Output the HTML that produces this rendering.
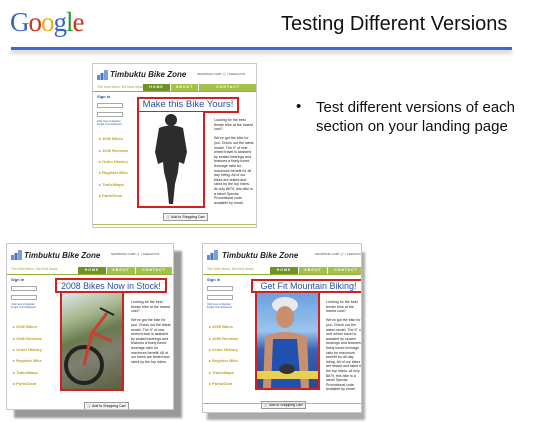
<!DOCTYPE html>
<html><head><meta charset="utf-8"><style>
*{margin:0;padding:0;box-sizing:border-box}
body{width:550px;height:422px;background:#fff;position:relative;overflow:hidden;font-family:"Liberation Sans",sans-serif}
.a{position:absolute}
.g{font-family:"Liberation Serif",serif;font-size:27px;letter-spacing:-1px;top:7px;left:10px}
.mk{position:absolute;width:165px;height:165px;background:#fff;border:1px solid #c8c8c8;overflow:hidden}
.mk .a{position:absolute}
.logo{left:4px;top:6px;width:11px;height:10px}
.ttl{left:17px;top:6px;font-size:8px;font-weight:bold;font-style:italic;color:#222;white-space:nowrap}
.cart{left:104px;top:8px;font-size:3px;color:#444;white-space:nowrap}
.tag{left:4px;top:21px;font-size:3.5px;color:#b0a040;white-space:nowrap}
.nav{top:20px;height:7px;font-size:3.5px;color:#fff;font-weight:bold;text-align:center;line-height:7px;letter-spacing:1px}
.line{left:0;top:27px;width:100%;height:1px;background:#9ab040}
.side{font-size:4px;color:#c0a020;font-weight:bold;left:6px;white-space:nowrap}
.in{left:4px;width:26px;height:5px;border:1px solid #aaa}
.hd{border:2px solid #d02020;color:#2a50a0;font-size:9px;text-align:center;white-space:nowrap;line-height:12px;overflow:hidden}
.img{border:2px solid #d02020;border-top:none}
.txt{font-size:3.6px;line-height:4.6px;color:#222}
.btn{font-size:3.5px;border:1px solid #999;padding:1px 2px;white-space:nowrap;background:#f4f4f4}
.bot{left:0;bottom:2px;width:100%;height:1px;background:#b0c060}
</style></head><body>
<div class="a g"><span style="color:#3464c8">G</span><span style="color:#d03020">o</span><span style="color:#e8b010">o</span><span style="color:#3464c8">g</span><span style="color:#2a9a30">l</span><span style="color:#d03020">e</span></div>
<div class="a" style="left:281px;top:13px;font-size:20px;color:#111;white-space:nowrap">Testing Different Versions</div>
<div class="a" style="left:11px;top:47px;width:501px;height:3px;background:#3e6ad0;box-shadow:0 3px 4px rgba(0,0,0,.25)"></div>
<div class="a" style="left:296px;top:98px;font-size:15px;color:#111">•</div>
<div class="a" style="left:316px;top:98px;font-size:15px;line-height:19px;color:#111;white-space:nowrap">Test different versions of each<br>section on your landing page</div>

<!-- mockup 1 -->
<div class="mk" style="left:92px;top:63px">
<svg class="a logo" viewBox="0 0 11 10"><rect x="0" y="5" width="3" height="5" fill="#6a8ac8"/><rect x="3.5" y="3" width="3" height="7" fill="#4a70c0"/><rect x="7" y="0" width="4" height="10" fill="#7aa0d8"/></svg>
<div class="a ttl">Timbuktu Bike Zone</div>
<div class="a cart">SHOPPING CART 🛒 | CHECKOUT</div>
<div class="a tag">The best bikes, the best deals</div>
<div class="a nav" style="left:50px;width:27px;background:#6e9426">HOME</div>
<div class="a nav" style="left:78px;width:27px;background:#a4c24a">ABOUT</div>
<div class="a nav" style="left:106px;width:58px;background:#a4c24a">CONTACT</div>
<div class="a line"></div>
<div class="a side" style="left:4px;top:30px;color:#2a50a0">Sign in</div>
<div class="a in" style="top:39px"></div><div class="a in" style="top:48px"></div>
<div class="a" style="left:4px;top:56px;font-size:2.5px;color:#2a50a0">Click here to Register<br>Forgot Your Password</div>
<div class="a side" style="top:72px">▸ 2006 Bikes</div>
<div class="a side" style="top:84px">▸ 2006 Reviews</div>
<div class="a side" style="top:95px">▸ Order History</div>
<div class="a side" style="top:106px">▸ Register Bike</div>
<div class="a side" style="top:118px">▸ Trails/Maps</div>
<div class="a side" style="top:129px">▸ Parts/Gear</div>
<div class="a hd" style="left:44px;top:33px;width:102px;height:16px;font-size:9.5px">Make this Bike Yours!</div>
<div class="a img" style="left:44px;top:48px;width:68px;height:96px;background:#fff">
<svg width="64" height="94" viewBox="0 0 64 94"><g fill="#2c2c2c"><circle cx="32" cy="8" r="6"/><path d="M20 16 Q32 11 44 16 L48 40 L45 52 L40 50 L39 60 L36 72 L34 92 L30 92 L28 72 L25 60 L24 50 L19 52 L16 40Z"/><rect x="22" y="24" width="20" height="3"/></g></svg></div>
<div class="a txt" style="left:121px;top:54px;width:40px">Looking for the best terrain bike at the lowest cost?<br><br>We've got the bike for you. Check out the latest model. The 5" of rear wheel travel is assisted by sealed bearings and features a finely tuned leverage ratio for maximum benefit for all day riding. All of our bikes are tested and rated by the top riders. At only $679, this bike is a steal! Special Promotional code available by email.</div>
<div class="a btn" style="left:70px;top:149px">🛒 Add to Shopping Cart</div>
<div class="a bot"></div>
</div>

<!-- mockup 2 -->
<div class="a" style="left:14px;top:251px;width:168px;height:167px;background:#999;filter:blur(1px)"></div>
<div class="mk" style="left:6px;top:243px;width:168px;height:167px">
<svg class="a logo" viewBox="0 0 11 10"><rect x="0" y="5" width="3" height="5" fill="#6a8ac8"/><rect x="3.5" y="3" width="3" height="7" fill="#4a70c0"/><rect x="7" y="0" width="4" height="10" fill="#7aa0d8"/></svg>
<div class="a ttl" style="top:7px">Timbuktu Bike Zone</div>
<div class="a cart">SHOPPING CART 🛒 | CHECKOUT</div>
<div class="a tag" style="top:23px">The best bikes, the best deals</div>
<div class="a nav" style="left:71px;top:23px;width:28px;background:#6e9426">HOME</div>
<div class="a nav" style="left:100px;top:23px;width:28px;background:#a4c24a">ABOUT</div>
<div class="a nav" style="left:129px;top:23px;width:36px;background:#a4c24a">CONTACT</div>
<div class="a line" style="top:30px"></div>
<div class="a side" style="left:4px;top:33px;color:#2a50a0">Sign in</div>
<div class="a in" style="top:42px"></div><div class="a in" style="top:51px"></div>
<div class="a" style="left:4px;top:59px;font-size:2.5px;color:#2a50a0">Click here to Register<br>Forgot Your Password</div>
<div class="a side" style="top:80px">▸ 2006 Bikes</div>
<div class="a side" style="top:92px">▸ 2006 Reviews</div>
<div class="a side" style="top:103px">▸ Order History</div>
<div class="a side" style="top:114px">▸ Register Bike</div>
<div class="a side" style="top:126px">▸ Trails/Maps</div>
<div class="a side" style="top:137px">▸ Parts/Gear</div>
<div class="a hd" style="left:48px;top:34px;width:112px;height:15px;font-size:8.8px">2008 Bikes Now in Stock!</div>
<div class="a img" style="left:53px;top:49px;width:64px;height:98px;background:linear-gradient(160deg,#dfe8f0 0%,#a8b890 25%,#6a7a50 45%,#808070 65%,#5a6040 100%)">
<svg width="60" height="96" viewBox="0 0 60 96"><circle cx="22" cy="72" r="18" fill="none" stroke="#222" stroke-width="4"/><path d="M22 72 L30 40 L45 20 M30 40 L50 48" stroke="#c84030" stroke-width="3" fill="none"/><path d="M38 15 L52 22" stroke="#222" stroke-width="2"/></svg></div>
<div class="a txt" style="left:124px;top:56px;width:40px">Looking for the best terrain bike at the lowest cost?<br><br>We've got the bike for you. Check out the latest model. The 5" of rear wheel travel is assisted by sealed bearings and features a finely tuned leverage ratio for maximum benefit. All of our bikes are tested and rated by the top riders.</div>
<div class="a btn" style="left:77px;top:158px">🛒 Add to Shopping Cart</div>
</div>

<!-- mockup 3 -->
<div class="a" style="left:207px;top:252px;width:158px;height:168px;background:#aaa;filter:blur(1px)"></div>
<div class="mk" style="left:202px;top:243px;width:160px;height:170px">
<svg class="a logo" viewBox="0 0 11 10"><rect x="0" y="5" width="3" height="5" fill="#6a8ac8"/><rect x="3.5" y="3" width="3" height="7" fill="#4a70c0"/><rect x="7" y="0" width="4" height="10" fill="#7aa0d8"/></svg>
<div class="a ttl" style="top:7px;left:19px">Timbuktu Bike Zone</div>
<div class="a cart" style="left:112px">SHOPPING CART 🛒 | CHECKOUT</div>
<div class="a tag" style="top:23px">The best bikes, the best deals</div>
<div class="a nav" style="left:67px;top:23px;width:28px;background:#6e9426">HOME</div>
<div class="a nav" style="left:96px;top:23px;width:28px;background:#a4c24a">ABOUT</div>
<div class="a nav" style="left:125px;top:23px;width:36px;background:#a4c24a">CONTACT</div>
<div class="a line" style="top:30px"></div>
<div class="a side" style="left:4px;top:33px;color:#2a50a0">Sign in</div>
<div class="a in" style="top:42px"></div><div class="a in" style="top:51px"></div>
<div class="a" style="left:4px;top:59px;font-size:2.5px;color:#2a50a0">Click here to Register<br>Forgot Your Password</div>
<div class="a side" style="top:80px">▸ 2006 Bikes</div>
<div class="a side" style="top:92px">▸ 2006 Reviews</div>
<div class="a side" style="top:103px">▸ Order History</div>
<div class="a side" style="top:114px">▸ Register Bike</div>
<div class="a side" style="top:126px">▸ Trails/Maps</div>
<div class="a side" style="top:137px">▸ Parts/Gear</div>
<div class="a hd" style="left:48px;top:35px;width:115px;height:14px;line-height:10px;font-size:9px">Get Fit Mountain Biking!</div>
<div class="a img" style="left:52px;top:49px;width:65px;height:97px;background:linear-gradient(180deg,#6aa0e0 0%,#9cc4ec 40%,#3a60b0 60%,#2a4a90 100%)">
<svg width="61" height="95" viewBox="0 0 61 95"><ellipse cx="28" cy="12" rx="13" ry="8" fill="#e8e8f0"/><ellipse cx="28" cy="24" rx="9" ry="11" fill="#c89070"/><path d="M8 44 Q28 34 50 44 L52 95 L6 95Z" fill="#c89070"/><path d="M16 46 L40 46 L44 95 L14 95Z" fill="#2050b0"/><rect x="0" y="78" width="61" height="8" fill="#e8d050"/><ellipse cx="30" cy="76" rx="8" ry="5" fill="#333"/></svg></div>
<div class="a txt" style="left:123px;top:56px;width:38px">Looking for the best terrain bike at the lowest cost?<br><br>We've got the bike for you. Check out the latest model. The 5" of rear wheel travel is assisted by sealed bearings and features a finely tuned leverage ratio for maximum benefit for all day riding. All of our bikes are tested and rated by the top riders. At only $679, this bike is a steal! Special Promotional code available by email.</div>
<div class="a btn" style="left:58px;top:157px">🛒 Add to Shopping Cart</div>
<div class="a bot" style="bottom:8px"></div>
</div>
</body></html>
